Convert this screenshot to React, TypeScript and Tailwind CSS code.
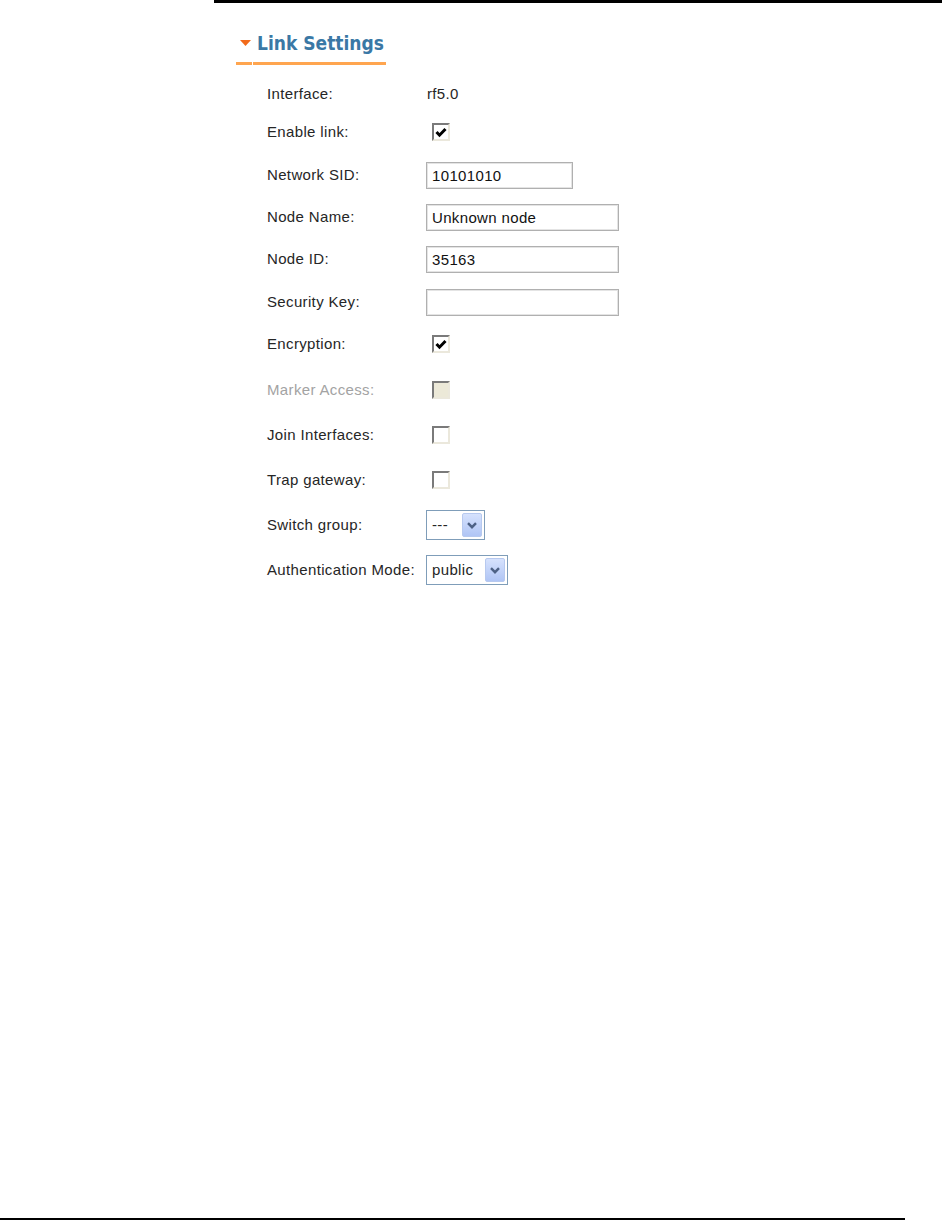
import React from 'react';

type Row =
    | { kind: 'text'; label: string; value: string; gap: string }
    | { kind: 'check'; label: string; checked: boolean; disabled?: boolean; gap: string }
    | { kind: 'input'; label: string; value: string; width: string; gap: string }
    | { kind: 'select'; label: string; value: string; width: string; gap: string };

const ROWS: Row[] = [
    { kind: 'text', label: 'Interface:', value: 'rf5.0', gap: 'mt-[14px]' },
    { kind: 'check', label: 'Enable link:', checked: true, gap: 'mt-[8px]' },
    { kind: 'input', label: 'Network SID:', value: '10101010', width: 'w-[147px]', gap: 'mt-[13px]' },
    { kind: 'input', label: 'Node Name:', value: 'Unknown node', width: 'w-[193px]', gap: 'mt-[12px]' },
    { kind: 'input', label: 'Node ID:', value: '35163', width: 'w-[193px]', gap: 'mt-[12px]' },
    { kind: 'input', label: 'Security Key:', value: '', width: 'w-[193px]', gap: 'mt-[13px]' },
    { kind: 'check', label: 'Encryption:', checked: true, gap: 'mt-[12px]' },
    { kind: 'check', label: 'Marker Access:', checked: false, disabled: true, gap: 'mt-[16px]' },
    { kind: 'check', label: 'Join Interfaces:', checked: false, gap: 'mt-[15px]' },
    { kind: 'check', label: 'Trap gateway:', checked: false, gap: 'mt-[15px]' },
    { kind: 'select', label: 'Switch group:', value: '---', width: 'w-[59px]', gap: 'mt-[15px]' },
    { kind: 'select', label: 'Authentication Mode:', value: 'public', width: 'w-[82px]', gap: 'mt-[15px]' },
];

const CheckBox: React.FC<{ checked: boolean; disabled?: boolean }> = ({ checked, disabled }) => (
    <div className={`ml-[6px] w-[18px] h-[18px] border-t-2 border-l-2 border-t-[#7a7a7a] border-l-[#7a7a7a] border-r-2 border-b-2 border-r-[#ebe8dc] border-b-[#ebe8dc] flex items-center justify-center ${disabled ? 'bg-[#ece9d8]' : 'bg-white'}`}>
        {checked && (
            <svg width="12" height="11" viewBox="0 0 12 11">
                <path d="M1.5 5 L4.5 8.2 L10.5 2" fill="none" stroke="#000" strokeWidth="3" />
            </svg>
        )}
    </div>
);

const Select: React.FC<{ value: string; width: string }> = ({ value, width }) => (
    <div className={`${width} h-[30px] border border-[#7f9db9] bg-white flex items-center justify-between pl-[5px] pr-[2px]`}>
        <span>{value}</span>
        <div className="w-[20px] h-[24px] rounded-[2px] border border-[#b7c9ef] bg-gradient-to-b from-[#d6e2fd] to-[#b0c5f5] flex items-center justify-center">
            <svg width="10" height="7" viewBox="0 0 10 7">
                <path d="M1 1.2 L5 5.2 L9 1.2" fill="none" stroke="#4d6185" strokeWidth="2.4" />
            </svg>
        </div>
    </div>
);

export default function App() {
    return (
        <div className="min-h-[1220px] flex flex-col bg-white text-[15px] tracking-[0.35px] text-[#262626]" style={{ fontFamily: '"Liberation Sans", Arial, sans-serif' }}>
            <div className="ml-[214px] h-[3px] bg-black" />

            <div className="ml-[236px] w-[150px] mt-[28px]">
                <div className="h-[24px] flex items-center gap-[6px] pl-[4px]">
                    <svg width="11" height="6" viewBox="0 0 11 6">
                        <path d="M0 0 H11 L5.5 6 Z" fill="#f26a1b" />
                    </svg>
                    <h2 className="text-[19px] font-bold leading-[24px] tracking-normal text-[#3a78a5]" style={{ fontFamily: '"DejaVu Sans Condensed", "DejaVu Sans", sans-serif', fontStretch: 'condensed' }}>
                        Link Settings
                    </h2>
                </div>
                <div className="mt-[7px] h-[3px] flex gap-[1px]">
                    <div className="w-[16px] bg-[#ffa54f]" />
                    <div className="flex-1 bg-[#ffa54f]" />
                </div>
            </div>

            <div className="ml-[267px] flex flex-col">
                {ROWS.map(row => (
                    <div key={row.label} className={`${row.gap} h-[30px] flex items-center`}>
                        <div className={`w-[159px] ${row.kind === 'check' && row.disabled ? 'text-[#a3a3a3]' : ''}`}>{row.label}</div>
                        {row.kind === 'text' && <span className="ml-[1px]">{row.value}</span>}
                        {row.kind === 'check' && <CheckBox checked={row.checked} disabled={row.disabled} />}
                        {row.kind === 'input' && (
                            <input
                                readOnly
                                value={row.value}
                                className={`${row.width} h-[27px] border border-[#b0b0b0] shadow-[inset_0_0_0_1px_#e4e4e4] px-[5px] text-[#111] outline-none`}
                            />
                        )}
                        {row.kind === 'select' && <Select value={row.value} width={row.width} />}
                    </div>
                ))}
            </div>

            <div className="mt-auto w-[905px] h-[2px] bg-black" />
        </div>
    );
}
